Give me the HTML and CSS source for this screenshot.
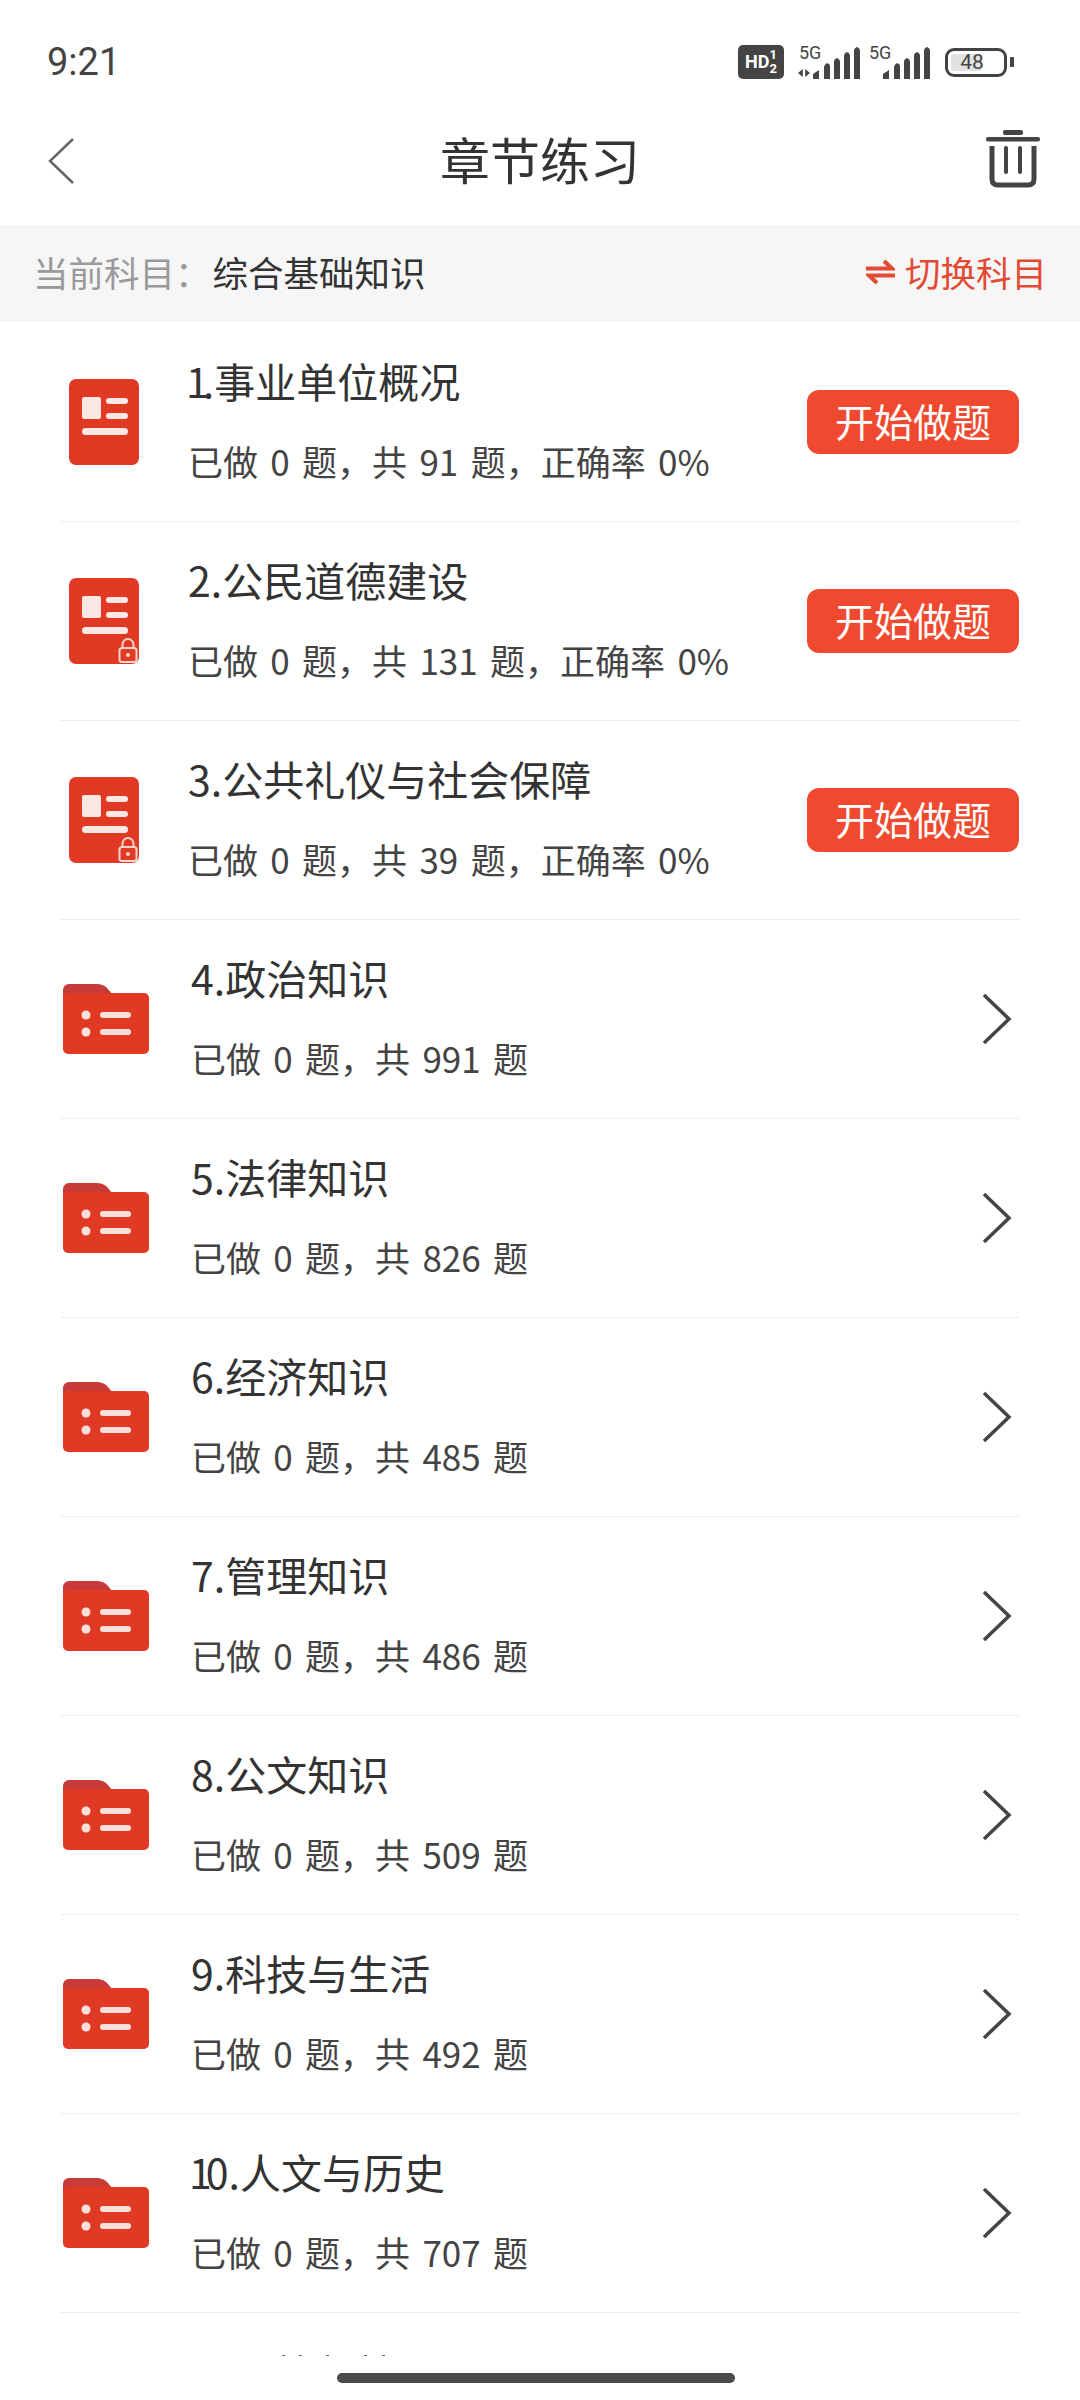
FILE: index.html
```html
<!DOCTYPE html>
<html lang="zh-CN">

<head>
    <meta charset="UTF-8">
    <meta name="viewport" content="width=device-width, initial-scale=1.0">
    <title>章节练习</title>
    <link rel="stylesheet" href="styles.css">
</head>

<body>
    <svg class="defs" width="0" height="0">
        <symbol id="doc" viewBox="0 0 70 86">
            <rect width="70" height="86" rx="7" fill="#e03a25" />
            <rect x="13" y="18" width="19" height="22" rx="2" fill="#fde8e4" />
            <rect x="37" y="19" width="22" height="6" rx="3" fill="#fde8e4" />
            <rect x="37" y="34" width="22" height="6" rx="3" fill="#fde8e4" />
            <rect x="13" y="49" width="46" height="7" rx="3.5" fill="#fde8e4" />
        </symbol>
        <symbol id="doc-lock" viewBox="0 0 70 86">
            <rect width="70" height="86" rx="7" fill="#e03a25" />
            <rect x="13" y="18" width="19" height="22" rx="2" fill="#fde8e4" />
            <rect x="37" y="19" width="22" height="6" rx="3" fill="#fde8e4" />
            <rect x="37" y="34" width="22" height="6" rx="3" fill="#fde8e4" />
            <rect x="13" y="49" width="46" height="7" rx="3.5" fill="#fde8e4" />
            <rect x="50.5" y="70" width="17" height="14" rx="2.5" fill="#e03a25" stroke="#fbd5cd" stroke-width="2" />
            <path d="M53.5 70v-3.500a5.500 5.500 0 0 1 11 0v3.500" fill="none" stroke="#fbd5cd" stroke-width="2" />
            <circle cx="59" cy="77" r="2" fill="#fbd5cd" />
        </symbol>
        <symbol id="folder" viewBox="0 0 86 70">
            <path d="M0 20V6a6 6 0 0 1 6-6h27q8 0 12 5l4 5H60V20z" fill="#c73a38" />
            <rect y="9" width="86" height="61" rx="5" fill="#e03a25" />
            <circle cx="23" cy="31" r="4.500" fill="#fde0da" />
            <circle cx="23" cy="48" r="4.500" fill="#fde0da" />
            <rect x="37" y="28" width="31" height="6" rx="3" fill="#fde0da" />
            <rect x="37" y="45" width="31" height="6" rx="3" fill="#fde0da" />
        </symbol>
        <symbol id="chevron" viewBox="0 0 32 54">
            <path d="M3 3l25 24L3 51" fill="none" stroke="#444" stroke-width="3.500" />
        </symbol>
        <symbol id="signal" viewBox="0 0 50 32">
            <path d="M1 32v-5l6-4v9zM12 32V20q0-2 3-4 3 1 3 3v13zM22 32V15q0-3 3-4 3 1 3 4v17zM32 32V9q0-3 3-4 3 1 3 4v23zM42 32V4q0-3 3-4 3 1 3 4v28z" fill="#444" />
        </symbol>
    </svg>

    <div class="status-bar">
        <span class="clock">9:21</span>
        <div class="status-icons">
            <span class="hd">HD<span class="hd-nums"><i>1</i><i>2</i></span></span>
            <span class="sim">
                <span class="sim-label">5G</span>
                <svg class="signal" width="50" height="32"><use href="#signal" /></svg>
                <span class="updown"></span>
            </span>
            <span class="sim sim-two">
                <span class="sim-label">5G</span>
                <svg class="signal" width="50" height="32"><use href="#signal" /></svg>
            </span>
            <span class="battery"><span class="battery-fill"></span><span class="battery-num">48</span></span>
            <span class="battery-nub"></span>
        </div>
    </div>

    <div class="nav-bar">
        <svg class="back" width="30" height="48" viewBox="0 0 30 48">
            <path d="M27 2L4 24l23 22" fill="none" stroke="#666" stroke-width="2.500" />
        </svg>
        <h1>章节练习</h1>
        <svg class="trash" width="56" height="58" viewBox="0 0 56 58">
            <rect x="18" y="0" width="20" height="5" rx="2" fill="#444" />
            <rect x="1" y="7" width="54" height="4.500" rx="2" fill="#444" />
            <path d="M7 16v33q0 6 6 6h30q6 0 6-6V16" fill="none" stroke="#444" stroke-width="5" />
            <path d="M21 18v24M35 18v24" fill="none" stroke="#444" stroke-width="4" stroke-linecap="round" />
        </svg>
    </div>

    <div class="subject-bar">
        <div><span class="subject-label">当前科目：</span><span class="subject-name">综合基础知识</span></div>
        <div class="switch">
            <svg width="29" height="28" viewBox="0 0 29 28">
                <path d="M0 10.500h26L18 3M29 17.500H3l8 7.500" fill="none" stroke="#e24a33" stroke-width="4" />
            </svg>
            <span>切换科目</span>
        </div>
    </div>

    <div class="list">
        <div class="row">
            <svg class="icon-doc" width="70" height="86"><use href="#doc" /></svg>
            <div class="row-text">
                <div class="row-title"><span class="narrow-one">1</span>.事业单位概况</div>
                <div class="row-sub">已做 0 题，共 91 题，正确率 0%</div>
            </div>
            <button class="start">开始做题</button>
        </div>
        <div class="row">
            <svg class="icon-doc" width="70" height="86"><use href="#doc-lock" /></svg>
            <div class="row-text">
                <div class="row-title">2.公民道德建设</div>
                <div class="row-sub">已做 0 题，共 131 题，正确率 0%</div>
            </div>
            <button class="start">开始做题</button>
        </div>
        <div class="row">
            <svg class="icon-doc" width="70" height="86"><use href="#doc-lock" /></svg>
            <div class="row-text">
                <div class="row-title">3.公共礼仪与社会保障</div>
                <div class="row-sub">已做 0 题，共 39 题，正确率 0%</div>
            </div>
            <button class="start">开始做题</button>
        </div>
        <div class="row">
            <svg class="icon-folder" width="86" height="70"><use href="#folder" /></svg>
            <div class="row-text">
                <div class="row-title">4.政治知识</div>
                <div class="row-sub">已做 0 题，共 991 题</div>
            </div>
            <svg class="chevron" width="32" height="54"><use href="#chevron" /></svg>
        </div>
        <div class="row">
            <svg class="icon-folder" width="86" height="70"><use href="#folder" /></svg>
            <div class="row-text">
                <div class="row-title">5.法律知识</div>
                <div class="row-sub">已做 0 题，共 826 题</div>
            </div>
            <svg class="chevron" width="32" height="54"><use href="#chevron" /></svg>
        </div>
        <div class="row">
            <svg class="icon-folder" width="86" height="70"><use href="#folder" /></svg>
            <div class="row-text">
                <div class="row-title">6.经济知识</div>
                <div class="row-sub">已做 0 题，共 485 题</div>
            </div>
            <svg class="chevron" width="32" height="54"><use href="#chevron" /></svg>
        </div>
        <div class="row">
            <svg class="icon-folder" width="86" height="70"><use href="#folder" /></svg>
            <div class="row-text">
                <div class="row-title">7.管理知识</div>
                <div class="row-sub">已做 0 题，共 486 题</div>
            </div>
            <svg class="chevron" width="32" height="54"><use href="#chevron" /></svg>
        </div>
        <div class="row">
            <svg class="icon-folder" width="86" height="70"><use href="#folder" /></svg>
            <div class="row-text">
                <div class="row-title">8.公文知识</div>
                <div class="row-sub">已做 0 题，共 509 题</div>
            </div>
            <svg class="chevron" width="32" height="54"><use href="#chevron" /></svg>
        </div>
        <div class="row">
            <svg class="icon-folder" width="86" height="70"><use href="#folder" /></svg>
            <div class="row-text">
                <div class="row-title">9.科技与生活</div>
                <div class="row-sub">已做 0 题，共 492 题</div>
            </div>
            <svg class="chevron" width="32" height="54"><use href="#chevron" /></svg>
        </div>
        <div class="row">
            <svg class="icon-folder" width="86" height="70"><use href="#folder" /></svg>
            <div class="row-text">
                <div class="row-title"><span class="narrow-one">1</span>0.人文与历史</div>
                <div class="row-sub">已做 0 题，共 707 题</div>
            </div>
            <svg class="chevron" width="32" height="54"><use href="#chevron" /></svg>
        </div>
    </div>

    <!-- top edge of the next row, which is cut off by the gesture area -->
    <svg class="cut-row" width="1080" height="3" viewBox="0 0 1080 3">
        <path d="M282 0h3v2h-3zM299 0h3v2h-3zM326 0h3v2h-3zM364 0h3v2h-3zM382 0h3v2h-3z" fill="#666" />
    </svg>

    <div class="home-area">
        <span class="home-bar"></span>
    </div>
</body>

</html>
```

FILE: styles.css
```css
html,
body {
    margin: 0;
    padding: 0;
}

body {
    position: relative;
    width: 1080px;
    height: 2400px;
    overflow: hidden;
    background-color: #fff;
    color: #333;
    font-family: "Noto Sans CJK SC", "Noto Sans", sans-serif;
}

.defs {
    display: block;
    height: 0;
}

/* status bar */
.status-bar {
    display: flex;
    justify-content: space-between;
    align-items: center;
    height: 107px;
    padding: 17px 66px 0 47px;
    box-sizing: border-box;
}

.clock {
    font-family: Roboto, sans-serif;
    font-size: 38px;
    color: #444;
}

.status-icons {
    display: flex;
    align-items: center;
}

.hd {
    display: flex;
    align-items: center;
    justify-content: center;
    width: 46px;
    height: 34px;
    border-radius: 5px;
    background-color: #444;
    color: #fff;
    font-family: Roboto, sans-serif;
    font-size: 18px;
    font-weight: 700;
    line-height: 1;
}

.hd-nums {
    display: flex;
    flex-direction: column;
    font-size: 13px;
    line-height: 14px;
}

.hd-nums i {
    font-style: normal;
}

.sim {
    position: relative;
    display: block;
    width: 70px;
    height: 34px;
    margin-left: 14px;
}

.sim-two {
    margin-left: 0;
}

.sim-label {
    position: absolute;
    left: 1px;
    top: -2px;
    font-family: Roboto, sans-serif;
    font-size: 18px;
    line-height: 20px;
    color: #444;
}

.signal {
    position: absolute;
    left: 14px;
    top: 2px;
}

.updown {
    position: absolute;
    left: 0;
    top: 24px;
    width: 12px;
    height: 8px;
    background-color: #444;
    clip-path: polygon(0 50%, 40% 0, 40% 100%, 60% 100%, 60% 0, 100% 50%, 60% 100%, 40% 100%);
}

.battery {
    position: relative;
    display: block;
    width: 62px;
    height: 29px;
    margin-left: 7px;
    border: 3px solid #444;
    border-radius: 9px;
    box-sizing: border-box;
}

.battery-fill {
    position: absolute;
    left: 3px;
    top: 3px;
    bottom: 3px;
    width: 31px;
    border-radius: 2px;
    background-color: #e2e2e2;
}

.battery-num {
    position: absolute;
    left: 0;
    right: 0;
    top: 0;
    padding-right: 8px;
    text-align: center;
    font-family: Roboto, sans-serif;
    font-size: 21px;
    line-height: 23px;
    color: #444;
}

.battery-nub {
    width: 4px;
    height: 10px;
    margin-left: 3px;
    border-radius: 1px;
    background-color: #444;
}

/* nav bar */
.nav-bar {
    display: grid;
    grid-template-columns: 1fr auto 1fr;
    align-items: center;
    height: 119px;
    padding: 0 39px 12px 46px;
    box-sizing: border-box;
}

.nav-bar h1 {
    margin: 0 7px 5px 0;
    font-size: 50px;
    line-height: 60px;
    font-weight: 400;
    color: #333;
}

.trash {
    justify-self: end;
    margin-bottom: 3px;
}

/* subject bar */
.subject-bar {
    display: flex;
    align-items: center;
    justify-content: space-between;
    height: 96px;
    padding: 0 33px 6px 33px;
    background-color: #f6f6f6;
    border-top: 1px solid #ececec;
    box-sizing: border-box;
    font-size: 35.5px;
}

.subject-label {
    color: #9a9a9a;
}

.subject-name {
    margin-left: 2px;
    color: #333;
}

.switch {
    display: flex;
    align-items: center;
    gap: 10px;
    color: #e24a33;
}

/* list */
.list {
    padding: 1px 60px 0;
}

.row {
    display: flex;
    align-items: center;
    height: 199px;
    border-bottom: 1px solid #efefef;
    box-sizing: border-box;
}

.icon-doc {
    flex: none;
    margin: 0 49px 0 9px;
}

.icon-folder {
    flex: none;
    margin: 0 42px 0 3px;
}

.row-text {
    flex: 1;
    display: flex;
    flex-direction: column;
    gap: 27px;
    padding-bottom: 7px;
}

.row-title {
    font-size: 41px;
    line-height: 58px;
    color: #333;
}

.narrow-one {
    display: inline-block;
    margin-left: -2px;
    letter-spacing: -6px;
}

.row-sub {
    font-size: 35px;
    line-height: 50px;
    word-spacing: 4.5px;
    color: #444;
}

.start {
    flex: none;
    width: 212px;
    height: 64px;
    padding: 0 0 4px;
    margin-right: 1px;
    border: none;
    border-radius: 12px;
    background-color: #ef4a30;
    color: #fff;
    font-family: inherit;
    font-size: 39px;
    line-height: 1;
}

.chevron {
    flex: none;
    margin-right: 7px;
}

.cut-row {
    display: block;
    margin-top: 42px;
}

/* bottom gesture area */
.home-area {
    position: absolute;
    left: 0;
    right: 0;
    bottom: 0;
    height: 44px;
    display: flex;
    justify-content: center;
    background-color: #fff;
}

.home-bar {
    width: 398px;
    height: 10px;
    margin: 17px 8px 0 0;
    border-radius: 5px;
    background-color: #4a4a4a;
}
```
